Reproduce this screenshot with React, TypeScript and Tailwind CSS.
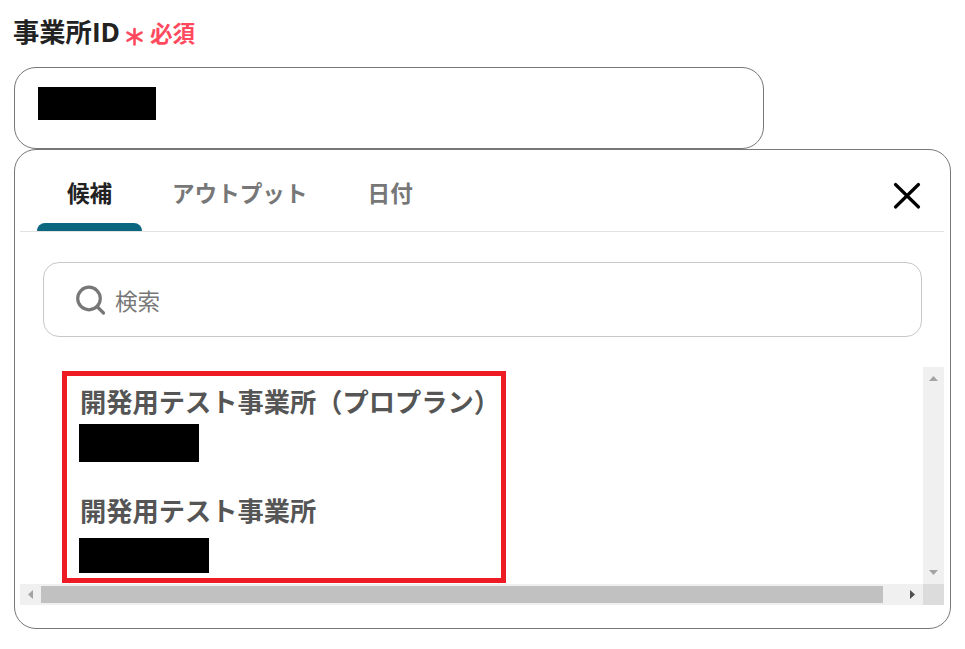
type Suggestion = {
  name: string;
  className: string;
  maskClassName: string;
};

const tabs = [
  { label: "候補", active: true },
  { label: "アウトプット", active: false },
  { label: "日付", active: false },
];

const suggestions: Suggestion[] = [
  {
    name: "開発用テスト事業所（プロプラン）",
    className: "h-[109px]",
    maskClassName: "mt-[6px] h-[38px] w-[120px]",
  },
  {
    name: "開発用テスト事業所",
    className: "h-[92px]",
    maskClassName: "mt-[11px] h-[35px] w-[130px]",
  },
];

function RequiredMark() {
  return (
    <div className="flex text-[#ff4a5e]">
      <svg
        aria-hidden="true"
        className="mt-[27px] h-[19px] w-[17px]"
        viewBox="0 0 17 19"
        fill="none"
        stroke="currentColor"
        strokeWidth="2.6"
        strokeLinecap="round"
      >
        <path d="M8.5 2v15.5M1.5 5.7l14 8M15.5 5.7l-14 8" />
      </svg>
      <span className="mt-[22px] ml-[7px] text-[22.6px] leading-6 font-bold">
        必須
      </span>
    </div>
  );
}

function TabBar() {
  return (
    <div className="flex h-[82px] justify-between border-b border-[#e2e2e2] pr-[22px] pl-[17px]">
      <div className="flex">
        {tabs.map(({ label, active }) => (
          <button
            key={label}
            type="button"
            className={`flex flex-col justify-between px-[30px] pt-[30px] text-[22.6px] leading-7 font-bold whitespace-nowrap ${
              active ? "w-[105px] text-[#222]" : "text-[#777]"
            }`}
          >
            <span>{label}</span>
            {active && (
              <span className="-mx-[30px] h-2 w-[105px] rounded-t-[8px] bg-[#0b6680]" />
            )}
          </button>
        ))}
      </div>
      <button type="button" aria-label="閉じる" className="mt-[31px] h-[30px] w-[30px]">
        <svg
          viewBox="0 0 30 30"
          fill="none"
          stroke="#000"
          strokeWidth="3.2"
          strokeLinecap="round"
        >
          <path d="M3.5 3.5l23 22.5M26.5 3.5l-23 22.5" />
        </svg>
      </button>
    </div>
  );
}

function SearchBox() {
  return (
    <div className="mt-[30px] ml-[23px] flex h-[75px] w-[879px] rounded-[16px] border border-[#c8c8c8] text-[#777]">
      <svg
        aria-hidden="true"
        className="mt-[21px] ml-8 h-8 w-8"
        viewBox="0 0 32 32"
        fill="none"
        stroke="currentColor"
        strokeWidth="3.2"
        strokeLinecap="round"
      >
        <circle cx="13" cy="14.5" r="11.3" />
        <path d="M21 22.5l6.5 6.5" />
      </svg>
      <span className="mt-[23px] ml-[7px] text-[22.6px] leading-8">検索</span>
    </div>
  );
}

function VerticalScrollbar() {
  return (
    <div className="flex w-[21px] flex-col items-center justify-between bg-[#f0f0f0] pt-[9px] pb-[9px]">
      <svg className="h-[5px] w-[9px]" viewBox="0 0 9 5" fill="#a3a3a3">
        <path d="M0 5L4.5 0L9 5z" />
      </svg>
      <svg className="h-[5px] w-[9px]" viewBox="0 0 9 5" fill="#a3a3a3">
        <path d="M0 0h9L4.5 5z" />
      </svg>
    </div>
  );
}

function HorizontalScrollbar() {
  return (
    <div className="flex h-[21px] bg-[#f0f0f0]">
      <div className="flex w-[21px] items-center pl-2">
        <svg className="h-[9px] w-[5px]" viewBox="0 0 5 9" fill="#a3a3a3">
          <path d="M5 0v9L0 4.5z" />
        </svg>
      </div>
      <div className="mt-[2px] h-[17px] w-[842px] bg-[#c1c1c1]" />
      <div className="flex flex-1 items-center pl-[27px]">
        <svg className="h-[9px] w-[5px]" viewBox="0 0 5 9" fill="#505050">
          <path d="M0 0v9l5-4.5z" />
        </svg>
      </div>
      <div className="w-[21px] bg-[#dcdcdc]" />
    </div>
  );
}

export default function App() {
  return (
    <main className="h-[649px] w-[965px] overflow-hidden bg-white pl-[14px] font-['Noto_Sans','Noto_Sans_CJK_JP',sans-serif]">
      <div className="flex h-[67px]">
        <h1 className="mt-[17px] -ml-px w-[113px] text-[26.3px] leading-[30px] font-bold whitespace-nowrap text-[#222]">
          事業所<span className="font-['Open_Sans',sans-serif]">ID</span>
        </h1>
        <RequiredMark />
      </div>

      <div className="h-[82px] w-[750px] rounded-[22px] border border-[#777] pt-[19px] pl-[23px]">
        <div className="h-[33px] w-[118px] bg-black" />
      </div>

      <section className="h-[480px] w-[937px] rounded-[22px] border border-[#777] pr-[6px] pl-[5px]">
        <TabBar />
        <SearchBox />
        <div className="mt-[30px] flex h-[217px] w-[924px] justify-between">
          <ul className="mt-1 ml-[42px] h-[212px] w-[444px] border-5 border-[#ed1c24] pl-3">
            {suggestions.map(({ name, className, maskClassName }) => (
              <li key={name} className={`pt-[10px] ${className}`}>
                <p className="ml-[1px] text-[26.25px] leading-8 font-bold whitespace-nowrap text-[#555]">
                  {name}
                </p>
                <div className={`bg-black ${maskClassName}`} />
              </li>
            ))}
          </ul>
          <VerticalScrollbar />
        </div>
        <HorizontalScrollbar />
      </section>
    </main>
  );
}
